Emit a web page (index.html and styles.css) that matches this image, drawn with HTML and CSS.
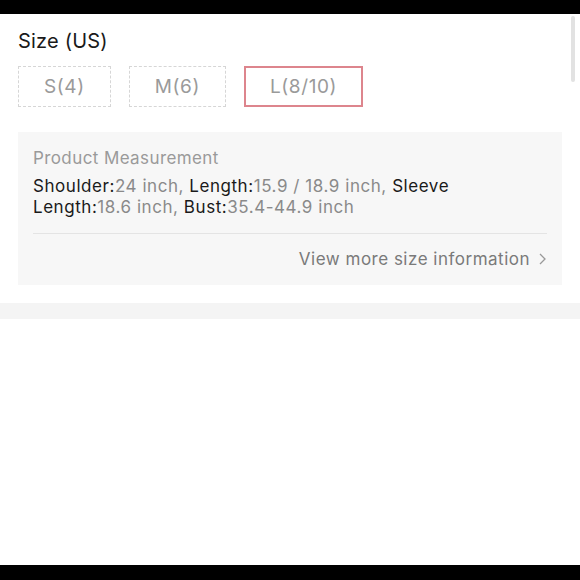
FILE: index.html
```html
<!DOCTYPE html>
<html lang="en">

<head>
    <meta charset="UTF-8">
    <meta name="viewport" content="width=device-width, initial-scale=1.0">
    <title>Size</title>
    <link rel="stylesheet" href="styles.css">
</head>

<body>
    <div class="screen">
        <div class="bar"></div>

        <div class="main">
            <div class="size">
                <h2 class="size-title">Size (US)</h2>
                <div class="size-list">
                    <div class="size-item">S(4)</div>
                    <div class="size-item">M(6)</div>
                    <div class="size-item active">L(8/10)</div>
                </div>

                <div class="measure">
                    <p class="measure-title">Product Measurement</p>
                    <p class="measure-text"><b>Shoulder:</b>24 inch, <b>Length:</b>15.9 / 18.9 inch, <b>Sleeve Length:</b>18.6 inch, <b>Bust:</b>35.4-44.9 inch</p>
                    <div class="measure-more">
                        <span>View more size information</span>
                        <svg class="arrow" width="9" height="14" viewBox="0 0 9 14">
                            <path d="M2 2 L7 7 L2 12" fill="none" stroke="#999" stroke-width="1.3" />
                        </svg>
                    </div>
                </div>
            </div>

            <div class="split"></div>

            <!-- 滚动条 -->
            <div class="scroll-thumb"></div>
        </div>

        <div class="bar bottom"></div>
    </div>
</body>

</html>
```

FILE: styles.css
```css
* {
    margin: 0;
    padding: 0;
    box-sizing: border-box;
}

html,
body {
    width: 100%;
    height: 100%;
    background: #fff;
}

body {
    font-family: Inter, "Liberation Sans", Arial, sans-serif;
    color: #222;
}

.screen {
    height: 580px;
    display: flex;
    flex-direction: column;
}

.bar {
    height: 14px;
    background: #000;
    flex-shrink: 0;
}

.bar.bottom {
    height: 15px;
}

.main {
    flex: 1;
    position: relative;
    overflow: hidden;
}

/*尺码*/
.size {
    padding: 15px 18px 18px;
}

.size-title {
    font-size: 20px;
    font-weight: normal;
    line-height: 24px;
    letter-spacing: 0.2px;
    color: #1a1a1a;
}

.size-list {
    display: flex;
    gap: 18px;
    margin-top: 13px;
}

.size-item {
    height: 41px;
    padding: 0 25px;
    border: 1px dashed #d6d6d6;
    color: #9a9a9a;
    font-size: 19px;
    line-height: 39px;
    letter-spacing: 0.6px;
}

.size-item.active {
    border: 2px solid #dd858d;
    line-height: 37px;
    padding: 0 24px;
}

/*尺寸信息*/
.measure {
    margin-top: 25px;
    background: #f7f7f7;
    padding: 16px 15px 15px;
    letter-spacing: 0.55px;
}

.measure-title {
    font-size: 17px;
    line-height: 20px;
    letter-spacing: 0.4px;
    color: #9a9a9a;
}

.measure-text {
    margin-top: 8px;
    font-size: 17px;
    line-height: 21px;
    color: #8a8a8a;
    padding: 0 12px 15px 0;
    border-bottom: 1px solid #e4e4e4;
}

.measure-text b {
    font-weight: normal;
    color: #1a1a1a;
}

.measure-more {
    display: flex;
    justify-content: flex-end;
    align-items: center;
    gap: 8px;
    padding-top: 14px;
    font-size: 17px;
    line-height: 22px;
    letter-spacing: 0.5px;
    color: #7a7a7a;
}

.split {
    height: 16px;
    background: #f4f4f4;
}

.scroll-thumb {
    position: absolute;
    top: 2px;
    right: 5px;
    width: 4px;
    height: 66px;
    border-radius: 2px;
    background: #e2e2e2;
}
```
